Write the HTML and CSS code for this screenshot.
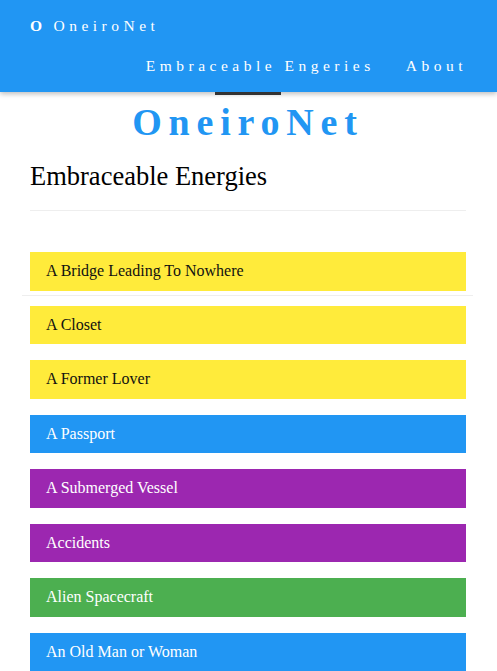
FILE: index.html
```html
<!DOCTYPE html>
<html>
<head>
<meta charset="utf-8">
<link rel="stylesheet" href="styles.css">
</head>
<body>
<header class="navbar">
  <div class="brand"><b class="brand-o">O</b> OneiroNet</div>
  <nav class="links">
    <a class="link active">Embraceable Engeries</a>
    <a class="link">About</a>
  </nav>
  <span class="indicator"></span>
</header>
<main class="content">
  <h1 class="site-title">OneiroNet</h1>
  <h2 class="page-title">Embraceable Energies</h2>
  <hr class="rule">
  <ul class="items">
    <li class="item yellow">A Bridge Leading To Nowhere</li>
    <li class="sep"></li>
    <li class="item yellow">A Closet</li>
    <li class="item yellow">A Former Lover</li>
    <li class="item blue">A Passport</li>
    <li class="item purple">A Submerged Vessel</li>
    <li class="item purple">Accidents</li>
    <li class="item green">Alien Spacecraft</li>
    <li class="item blue">An Old Man or Woman</li>
  </ul>
</main>
</body>
</html>
```
FILE: styles.css
```css
* { box-sizing: border-box; }
html, body { margin: 0; padding: 0; }
body {
  font-family: "Liberation Serif", Georgia, serif;
  background: #fff;
  color: #000;
  overflow: hidden;
}
.navbar {
  position: relative;
  background: #2196F3;
  height: 92px;
  box-shadow: 0 2px 5px rgba(0,0,0,0.26);
  color: #fff;
  padding: 16px 30px 0 30px;
  z-index: 2;
}
.brand {
  font-size: 15.5px;
  letter-spacing: 4.5px;
  line-height: 20px;
}
.brand-o { letter-spacing: 3px; }
.links {
  display: flex;
  justify-content: flex-end;
  gap: 31px;
  margin-top: 20px;
  font-size: 15.5px;
  letter-spacing: 4.5px;
  line-height: 20px;
}
.link { color: #fff; }
.indicator {
  position: absolute;
  left: 215px;
  top: 92px;
  width: 66px;
  height: 3px;
  background: #333;
}
.content {
  padding: 0 31px 0 30px;
}
.site-title {
  margin: 0;
  padding-top: 8px;
  text-align: center;
  color: #2196F3;
  font-size: 38px;
  font-weight: bold;
  letter-spacing: 6.8px;
  line-height: 44px;
}
.page-title {
  margin: 16px 0 0 0;
  font-weight: normal;
  font-size: 26.5px;
  line-height: 32px;
}
.rule {
  border: 0;
  border-top: 1px solid #eee;
  margin: 18px 0 0 0;
}
.items {
  list-style: none;
  margin: 41px 0 0 0;
  padding: 0;
  display: flex;
  flex-direction: column;
  gap: 16px;
}
.item {
  height: 38.5px;
  padding: 0 16px;
  display: flex;
  align-items: center;
  font-size: 16px;
}
.sep {
  height: 1px;
  background: #eee;
  margin: -12px -7px -6px -8px;
}
.yellow { background: #FFEB3B; color: #111; }
.blue { background: #2196F3; color: #fff; }
.purple { background: #9C27B0; color: #fff; }
.green { background: #4CAF50; color: #fff; }
```
